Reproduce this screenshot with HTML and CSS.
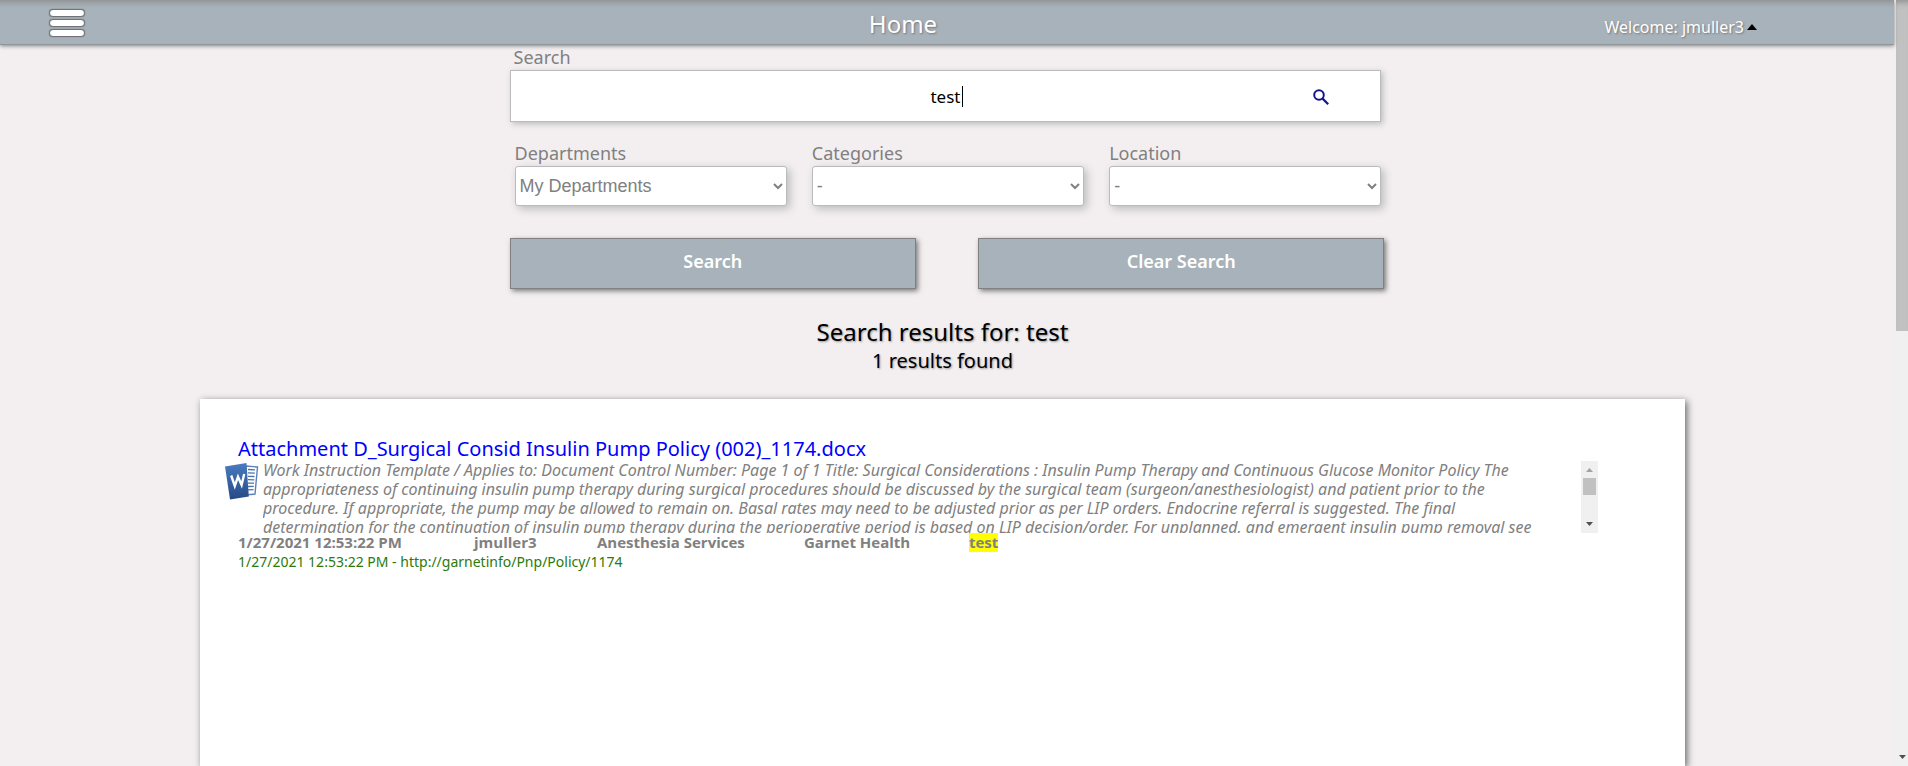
FILE: index.html
```html
<!DOCTYPE html>
<html lang="en">
<head>
<meta charset="utf-8">
<title>Home</title>
<link rel="stylesheet" href="styles.css">
</head>
<body>
<div class="page">
  <header class="topbar">
    <button class="menu" type="button" aria-label="Menu"><span class="menu-bar"></span><span class="menu-bar"></span><span class="menu-bar"></span></button>
    <h1 class="topbar-title">Home</h1>
    <button class="user" type="button">Welcome: jmuller3<svg class="user-arrow" width="10" height="6" viewBox="0 0 10 6" aria-hidden="true"><path d="M0 6 5 0l5 6z" fill="#000"/></svg></button>
  </header>
  <main class="content">
    <form class="search">
      <label class="label" for="q">Search</label>
      <div class="search-box">
        <input class="search-input" id="q" type="text" value="test">
        <span class="text-cursor"></span>
        <button class="search-icon" type="button" aria-label="Run search"><svg width="16" height="16" viewBox="0 0 16 16" fill="none" stroke="#15158c"><circle cx="6" cy="6" r="4.8" stroke-width="2"/><path d="m9.4 9.4 5.8 5.8" stroke-width="2.2"/></svg></button>
      </div>
      <div class="filters">
        <div class="filter"><label class="label" for="dep">Departments</label><select class="select" id="dep"><option>My Departments</option></select></div>
        <div class="filter"><label class="label" for="cat">Categories</label><select class="select" id="cat"><option>-</option></select></div>
        <div class="filter"><label class="label" for="loc">Location</label><select class="select" id="loc"><option>-</option></select></div>
      </div>
      <div class="actions">
        <button class="action" type="button">Search</button>
        <button class="action" type="button">Clear Search</button>
      </div>
    </form>
    <div class="summary">
      <h2 class="summary-title">Search results for: test</h2>
      <p class="summary-count">1 results found</p>
    </div>
    <section class="results">
      <article class="result">
        <a class="result-title" href="#">Attachment D_Surgical Consid Insulin Pump Policy (002)_1174.docx</a>
        <div class="excerpt">
          <svg class="doc-icon" width="34" height="38" viewBox="0 0 34 38" aria-hidden="true">
            <defs><linearGradient id="cover" x1="0" y1="0" x2="0" y2="1"><stop offset="0" stop-color="#4a7cc0"/><stop offset="1" stop-color="#254a86"/></linearGradient></defs>
            <path d="m21 3 11.500 1L30 31l-9 1z" fill="#fff" stroke="#5b82ba" stroke-width="1.400"/>
            <path d="m23 6.500 7 .4m-7 3 6.800.3m-6.800 3.100 6.500.2m-6.500 3.200 6.300.1m-6.300 3.300h6m-6 3.400 5.800-.1m-5.800 3.500 5.500-.2" stroke="#4a72ac" stroke-width="1.300"/>
            <path d="M0 3.500 21.500 0l2.300 33.500L5 36.400z" fill="url(#cover)"/>
            <path d="m6.200 12.500 3.600 10.500 3.200-9.300 3.600 8.300 2.600-11" fill="none" stroke="#fff" stroke-width="2.400"/>
          </svg>
          <div class="excerpt-text">
            <p class="line">Work Instruction Template / Applies to: Document Control Number: Page 1 of 1 Title: Surgical Considerations : Insulin Pump Therapy and Continuous Glucose Monitor Policy The</p>
            <p class="line">appropriateness of continuing insulin pump therapy during surgical procedures should be discussed by the surgical team (surgeon/anesthesiologist) and patient prior to the</p>
            <p class="line">procedure. If appropriate, the pump may be allowed to remain on. Basal rates may need to be adjusted prior as per LIP orders. Endocrine referral is suggested. The final</p>
            <p class="line">determination for the continuation of insulin pump therapy during the perioperative period is based on LIP decision/order. For unplanned, and emergent insulin pump removal see</p>
          </div>
          <div class="scrollbar" aria-hidden="true">
            <svg width="7" height="4" viewBox="0 0 7 4"><path d="M0 4 3.500 0 7 4z" fill="#a3a3a3"/></svg>
            <span class="scrollbar-thumb"></span>
            <svg class="scrollbar-down" width="7" height="4" viewBox="0 0 7 4"><path d="M0 0h7L3.500 4z" fill="#505050"/></svg>
          </div>
        </div>
        <div class="meta"><span>1/27/2021 12:53:22 PM</span><span>jmuller3</span><span>Anesthesia Services</span><span>Garnet Health</span><mark class="hit">test</mark></div>
        <p class="source">1/27/2021 12:53:22 PM - http://garnetinfo/Pnp/Policy/1174</p>
      </article>
    </section>
  </main>
</div>
<div class="page-scroll" aria-hidden="true">
  <span class="page-thumb"></span>
  <svg class="page-down" width="7" height="4" viewBox="0 0 7 4"><path d="M0 0h7L3.500 4z" fill="#505050"/></svg>
</div>
</body>
</html>
```
FILE: styles.css
```css
* { box-sizing: border-box; }
body {
  margin: 0;
  display: flex;
  height: 100vh;
  overflow: hidden;
  background: #f3eff0;
  color: #000;
  font-family: "Trebuchet MS", "Noto Sans", sans-serif;
}
button { border: 0; padding: 0; background: none; font-family: inherit; cursor: pointer; }
h1, h2, p { margin: 0; font-weight: 400; }

.page { flex: 1; min-width: 0; display: flex; flex-direction: column; }

.topbar {
  flex: none;
  display: grid;
  grid-template-columns: 1fr auto 1fr;
  align-items: start;
  height: 45px;
  padding: 0 137px 0 49px;
  background: #a8b2ba;
  border-bottom: 1px solid #919699;
  box-shadow: 0 1px 4px #808080, inset 0 8px 6px -6px #8c8c8c;
  color: #fff;
  z-index: 1;
}
.menu { display: grid; gap: 2px; justify-self: start; padding-top: 9px; }
.menu-bar { width: 36px; height: 8px; background: #fff; border: 1px solid #707478; border-radius: 4px; box-shadow: 0 0 1px #555; }
.topbar-title { font-size: 24px; line-height: 32px; padding-top: 8px; text-shadow: 1px 1px 2px #777; }
.user { display: flex; align-items: center; gap: 3px; justify-self: end; padding-top: 15px; color: #fff; font-size: 16px; line-height: 24px; text-shadow: 1px 1px 2px #777; }

.content { flex: 1; min-height: 0; display: flex; flex-direction: column; align-items: center; padding-right: 9px; }
.search { flex: none; width: 47%; padding: 0 1px 0 10px; }
.label { display: block; padding-left: 4px; color: #808080; font-size: 18px; line-height: 25px; }
.search-box {
  position: relative;
  display: flex;
  height: 52px;
  margin-right: 3px;
  border: 1px solid #bbb;
  background: #fff;
  box-shadow: 2px 2px 6px #bbb;
}
.search-input { width: 100%; border: 0; outline: 0; padding: 0; background: none; text-align: center; font-family: inherit; font-size: 17px; color: #000; }
.text-cursor { position: absolute; left: calc(50% + 16px); top: 15px; width: 1px; height: 21px; background: #000; }
.search-icon { position: absolute; right: 51px; top: 18px; width: 16px; height: 16px; }
.search-icon svg { display: block; }

.filters { display: grid; grid-template-columns: repeat(3, 1fr); gap: 25px; margin: 19px 3px 0 5px; }
.filter .label { padding-left: 0; }
.select {
  display: block;
  width: 100%;
  height: 40px;
  border: 1px solid #bbb;
  border-radius: 3px;
  background: #fff;
  box-shadow: 3px 3px 8px #bbb;
  color: #808080;
  font-family: "Liberation Sans", Arial, sans-serif;
  font-size: 18px;
}
.actions { display: grid; grid-template-columns: 1fr 1fr; gap: 62px; margin-top: 32px; }
.action {
  height: 51px;
  padding-bottom: 6px;
  border: 1px solid #808080;
  background: #a8b2ba;
  box-shadow: 2px 2px 5px #777;
  color: #fff;
  font-size: 18px;
  font-weight: 600;
}

.summary { flex: none; padding: 28px 0 25px; text-align: center; text-shadow: 1px 1px 2px #999; }
.summary-title { font-size: 24px; line-height: 30px; }
.summary-count { font-size: 20px; line-height: 27px; }

.results { flex: 1; width: calc(100% - 400px); padding: 38px 87px 0 38px; background: #fff; box-shadow: 2px 2px 7px #666; }
.result { color: #808080; }
.result-title { display: block; color: #00f; font-size: 20px; line-height: 24px; text-decoration: none; }
.excerpt { display: flex; height: 72px; margin-left: -13px; overflow: hidden; }
.doc-icon { flex: none; margin: 2px 4px 0 0; }
.excerpt-text { flex: 1; min-width: 0; overflow: hidden; }
.line { font-size: 16px; line-height: 19px; font-style: italic; white-space: nowrap; }
.scrollbar { flex: none; display: flex; flex-direction: column; align-items: center; width: 17px; padding: 7px 0; background: #f0f0f0; }
.scrollbar-thumb { width: 13px; height: 17px; margin-top: 6px; background: #c1c1c1; }
.scrollbar-down { margin-top: auto; }
.meta { display: grid; grid-template-columns: 176px 63px 147px 105px max-content; gap: 60px; font-family: "Trebuchet MS", "Open Sans", sans-serif; font-size: 15px; font-weight: 700; line-height: 19px; white-space: nowrap; }
.hit { background: #ff0; color: #808080; }
.source { color: #2b7a0b; font-size: 14px; line-height: 19px; }

.page-scroll { flex: none; display: flex; flex-direction: column; align-items: flex-end; width: 14px; background: #f0f0f0; overflow: hidden; }
.page-thumb { width: 12px; height: 331px; background: #c1c1c1; box-shadow: inset 0 8px 6px -6px #8c8c8c; }
.page-down { margin: auto 2px 7px 0; }
```
